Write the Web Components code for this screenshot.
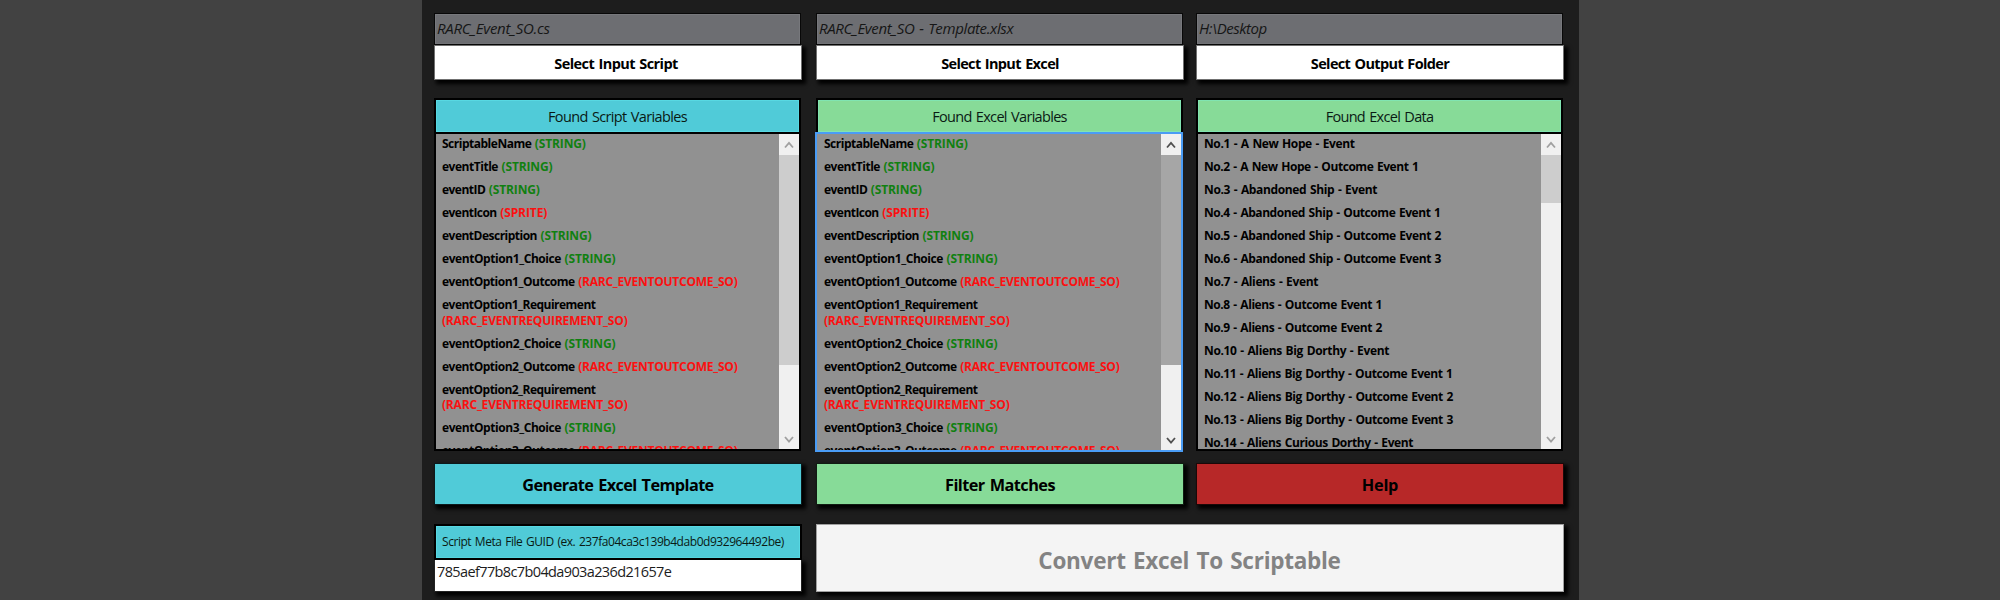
<!DOCTYPE html>
<html lang="en">
<head>
<meta charset="utf-8">
<title>Scriptable Converter</title>
<style>
html,body{margin:0;height:100%;background:#424242;overflow:hidden}
body{font-family:"Open Sans","Noto Sans",sans-serif;color:#000}
</style>
</head>
<body>
<converter-app></converter-app>
<script>
const define = (name, html, setup) => {
  const template = document.createElement('template');
  template.innerHTML = html;
  customElements.define(name, class extends HTMLElement {
    constructor() {
      super();
      this.attachShadow({ mode: 'open' }).append(template.content.cloneNode(true));
    }
    connectedCallback() { if (setup) setup(this, this.shadowRoot); }
  });
};

// One line of text, tracked so that it takes up the width given in "w".
define('fit-text', `<style>:host{display:inline-block;white-space:pre;word-spacing:.08em}</style><slot></slot>`, el => {
  const target = parseFloat(el.getAttribute('w'));
  const count = el.textContent.length;
  if (!target || !count) return;
  const natural = el.getBoundingClientRect().width;
  if (natural) el.style.letterSpacing = ((target - natural) / count).toFixed(3) + 'px';
});

define('path-field', `<style>
:host{display:block;box-sizing:border-box;height:32px;border:1px solid #080808;background:#6d6e72;
box-shadow:inset 0 0 0 1px #77787c;color:#161616;font:italic 400 15px/22px "Open Sans",sans-serif;padding:3px 0 0 2px}
</style><slot></slot>`);

define('app-button', `<style>
:host{display:flex;box-sizing:border-box;align-items:center;justify-content:center;background:var(--fill,#fff);
border:1px solid var(--edge,#707070);box-shadow:3px 3px 4px 1px #000;font-weight:700;font-size:var(--size,14.5px);line-height:20px;padding-top:var(--drop,2px);padding-right:var(--nudge,0)}
</style><slot></slot>`);

define('section-title', `<style>
:host{display:flex;box-sizing:border-box;align-items:center;justify-content:center;background:var(--fill);
border:2px solid #000;border-bottom:0;font-size:var(--size,14.5px);line-height:20px;box-shadow:inset 0 0 0 1px rgba(110,255,255,.25);color:#0a1a14}
</style><slot></slot>`);

define('scroll-bar', `<style>
:host{display:flex;flex-direction:column;width:20px;background:#f0f0f0;color:var(--arrow,#a0a0a0)}
svg{display:block;width:20px;height:21px;flex:none;fill:none;stroke:currentColor;stroke-width:1.8}
.thumb{background:var(--thumb,#cdcdcd);flex:none}
.space{flex:1}
</style>
<svg viewBox="0 0 20 21"><path d="M6 13.5 10 8.8 14 13.5"/></svg><div class="thumb"></div><div class="space"></div>
<svg viewBox="0 0 20 21"><path d="M6 9 10 13.7 14 9"/></svg>`, (el, root) => {
  root.querySelector('.thumb').style.height = el.getAttribute('thumb') + 'px';
});

define('list-box', `<style>
:host{display:flex;box-sizing:border-box;height:319px;border:2px solid #000;background:#919191;overflow:hidden}
:host([focused]){border-color:#4a9cf5}
.rows{flex:1;min-width:0;overflow:hidden;padding:1.8px 0 0 6px;font-weight:700;font-size:12px;line-height:15.5px}
:host([focused]) .rows{padding-left:7px}
</style><div class="rows"><slot></slot></div><slot name="bar"></slot>`);

define('variable-row', `<style>
:host{display:block;white-space:nowrap}
.type{color:#108010;margin-left:3.5px}
.type.bad{color:#fb1010}
.type.below{display:block;margin-left:0}
</style><fit-text class="name"></fit-text><fit-text class="type"></fit-text>`, (el, root) => {
  const [name, type] = root.querySelectorAll('fit-text');
  const fill = (node, text, w) => {
    node.textContent = text;
    node.setAttribute('w', w);
    node.remove();
    root.append(node);
  };
  fill(name, el.getAttribute('name'), el.getAttribute('w'));
  const kind = el.getAttribute('type');
  const widths = { STRING: 51, SPRITE: 47, RARC_EVENTOUTCOME_SO: 159.3, RARC_EVENTREQUIREMENT_SO: 185.5 };
  if (kind !== 'STRING') type.classList.add('bad');
  fill(type, '(' + kind + ')', widths[kind]);
  if (kind.includes('REQUIREMENT')) {
    type.classList.add('below');
  }
});

define('variable-list', `<style>:host{display:block}variable-row{padding-bottom:7.55px}</style>`, (el, root) => {
  const rows = [['ScriptableName','STRING',89.3],['eventTitle','STRING',56],['eventID','STRING',43.3],
    ['eventIcon','SPRITE',54.7],['eventDescription','STRING',95]];
  for (const n of [1, 2, 3]) {
    rows.push([`eventOption${n}_Choice`,'STRING',119],[`eventOption${n}_Outcome`,'RARC_EVENTOUTCOME_SO',132.7]);
    if (n < 3) rows.push([`eventOption${n}_Requirement`,'RARC_EVENTREQUIREMENT_SO',153.5]);
  }
  for (const [name, type, w] of rows) {
    const row = document.createElement('variable-row');
    row.setAttribute('name', name);
    row.setAttribute('type', type);
    row.setAttribute('w', w);
    root.append(row);
  }
});

define('data-list', `<style>:host{display:block}div{padding-bottom:7.55px;height:15.5px}</style>`, (el, root) => {
  const rows = [['A New Hope - Event',150.5],['A New Hope - Outcome Event 1',214.5],['Abandoned Ship - Event',173],
    ['Abandoned Ship - Outcome Event 1',236.5],['Abandoned Ship - Outcome Event 2',237],['Abandoned Ship - Outcome Event 3',237],
    ['Aliens - Event',114],['Aliens - Outcome Event 1',178],['Aliens - Outcome Event 2',178],['Aliens Big Dorthy - Event',185],
    ['Aliens Big Dorthy - Outcome Event 1',248.5],['Aliens Big Dorthy - Outcome Event 2',249],
    ['Aliens Big Dorthy - Outcome Event 3',249],['Aliens Curious Dorthy - Event',209]];
  rows.forEach(([text, w], i) => {
    const row = document.createElement('div');
    const label = document.createElement('fit-text');
    label.textContent = `No.${i + 1} - ${text}`;
    label.setAttribute('w', w);
    row.append(label);
    root.append(row);
  });
});

define('guid-input', `<style>
:host{display:block;box-sizing:border-box;height:32px;background:#fff;border:1px solid #222;border-top:0;
box-shadow:3px 3px 4px 1px #000;font-size:14.5px;line-height:20px;padding:2px 0 0 2px;color:#1c1c1c}
</style><slot></slot>`);

define('converter-app', `<style>
:host{display:block;box-sizing:border-box;width:1157px;height:600px;margin-left:422px;background:#1d1d1d;padding:13px 0 0 12px}
.grid{display:grid;grid-template-columns:368px 14px 368px 12px 368px;grid-template-rows:67px 18px 353px 12px 42px 19px 68px}
.a{grid-column:1}.b{grid-column:3}.c{grid-column:5}
.r1{grid-row:1}.r2{grid-row:3}.r3{grid-row:5}.r4{grid-row:7}
.wide{grid-column:3/6}
.stack{display:flex;flex-direction:column}
.r1 path-field{margin-right:1px}
.r1 app-button{height:35px}
.a.r1 app-button{--nudge:4px}
.r2 section-title{height:34px;padding-top:2px}
.r2{margin-right:1px}
.a.r4 section-title{height:36px;justify-content:flex-start;padding-left:6px;--size:12px;border-bottom:2px solid #000}
.cyan{--fill:#50cbd8;--edge:#0c1a1c}
.green{--fill:#87db98;--edge:#101c12}
.red{--fill:#b72828;--edge:#1c0808}
.r3{--size:16.3px}
.r4.wide{--fill:#f4f4f4;--edge:#a0a0a0;--size:22.5px;--drop:5px;--nudge:1px;color:#838383}
.focus{--thumb:#a6a6a6;--arrow:#505050}
list-box[focused]{margin:0 0 -1px -1px;height:320px}
</style>
<div class="grid">
  <div class="stack a r1"><path-field><fit-text w="112.7">RARC_Event_SO.cs</fit-text></path-field><app-button><fit-text w="123.5">Select Input Script</fit-text></app-button></div>
  <div class="stack b r1"><path-field><fit-text w="194.3">RARC_Event_SO - Template.xlsx</fit-text></path-field><app-button><fit-text w="117.7">Select Input Excel</fit-text></app-button></div>
  <div class="stack c r1"><path-field><fit-text w="67.7">H:\\Desktop</fit-text></path-field><app-button><fit-text w="138.3">Select Output Folder</fit-text></app-button></div>

  <div class="stack a r2"><section-title class="cyan"><fit-text w="139">Found Script Variables</fit-text></section-title>
    <list-box><variable-list></variable-list><scroll-bar slot="bar" thumb="210"></scroll-bar></list-box></div>
  <div class="stack b r2"><section-title class="green"><fit-text w="134.7">Found Excel Variables</fit-text></section-title>
    <list-box focused><variable-list></variable-list><scroll-bar class="focus" slot="bar" thumb="210"></scroll-bar></list-box></div>
  <div class="stack c r2"><section-title class="green"><fit-text w="107.7">Found Excel Data</fit-text></section-title>
    <list-box><data-list></data-list><scroll-bar slot="bar" thumb="48"></scroll-bar></list-box></div>

  <app-button class="a r3 cyan"><fit-text w="191.3">Generate Excel Template</fit-text></app-button>
  <app-button class="b r3 green"><fit-text w="110">Filter Matches</fit-text></app-button>
  <app-button class="c r3 red"><fit-text w="36.3">Help</fit-text></app-button>

  <div class="stack a r4"><section-title class="cyan"><fit-text w="342">Script Meta File GUID (ex. 237fa04ca3c139b4dab0d932964492be)</fit-text></section-title>
    <guid-input><fit-text w="234.3">785aef77b8c7b04da903a236d21657e</fit-text></guid-input></div>
  <app-button class="r4 wide"><fit-text w="302.3">Convert Excel To Scriptable</fit-text></app-button>
</div>`);
</script>
</body>
</html>
